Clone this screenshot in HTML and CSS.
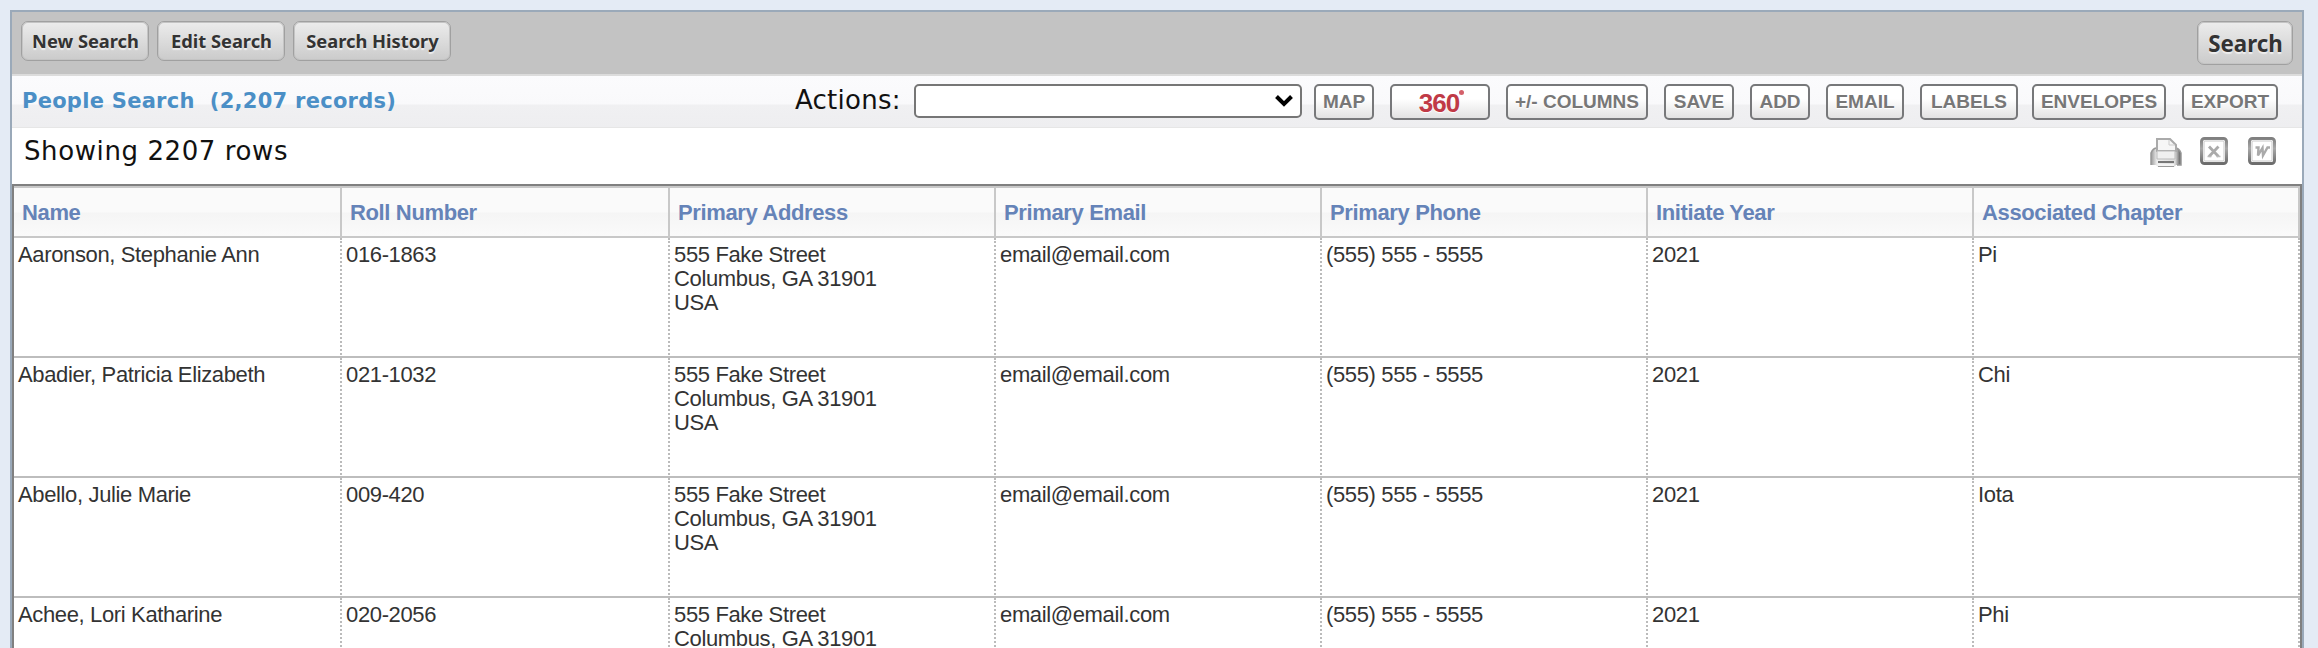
FILE: index.html
```html
<!DOCTYPE html>
<html lang="en">
<head>
  <meta charset="UTF-8">
  <title>People Search</title>
  <link rel="stylesheet" href="styles.css">
</head>
<body>
  <div class="page">
    <div class="toolbar">
      <button class="btn btn-new">New Search</button>
      <button class="btn btn-edit">Edit Search</button>
      <button class="btn btn-history">Search History</button>
      <button class="btn btn-search">Search</button>
    </div>

    <div class="heading">
      <h2>People Search&nbsp; (2,207 records)</h2>
      <label>Actions:</label>
      <div class="select">
        <svg width="20" height="14" viewBox="0 0 20 14"><path d="M2.5 2.5 L10 10 L17.5 2.5" fill="none" stroke="#000" stroke-width="4"/></svg>
      </div>
      <div class="actions">
        <button class="act map">MAP</button>
        <button class="act full"><span class="deg">360<i></i></span></button>
        <button class="act columns">+/- COLUMNS</button>
        <button class="act save">SAVE</button>
        <button class="act add">ADD</button>
        <button class="act email">EMAIL</button>
        <button class="act labels">LABELS</button>
        <button class="act envelopes">ENVELOPES</button>
        <button class="act export">EXPORT</button>
      </div>
    </div>

    <div class="status">
      <span class="count">Showing 2207 rows</span>
      <div class="icons">
        <svg width="32" height="30" viewBox="0 0 32 30">
          <defs>
            <linearGradient id="side" x1="0" y1="0" x2="1" y2="0"><stop offset="0" stop-color="#999"/><stop offset=".2" stop-color="#eee"/><stop offset=".8" stop-color="#ddd"/><stop offset="1" stop-color="#555"/></linearGradient>
            <linearGradient id="frame" x1="0" y1="0" x2="0" y2="1"><stop offset="0" stop-color="#808080"/><stop offset=".4" stop-color="#a8a8a8"/><stop offset="1" stop-color="#6c6c6c"/></linearGradient>
          </defs>
          <path d="M1 16 Q3 11 7 11 H25 Q29 11 31 16 V28 H26 L24 30 H8 L6 28 H1 Z" fill="url(#side)"/>
          <path d="M1 28 V16 Q3 11 7 11 M25 11 Q29 11 31 16 V28 H27" fill="none" stroke="#999" stroke-width="1.5"/>
          <path d="M7 14 V2 H20 L26 8 V14 Z" fill="#f6f6f6" stroke="#aaa" stroke-width="2"/>
          <path d="M19 3 V8 H25" fill="none" stroke="#ccc"/>
          <path d="M7 14 H25 V22 H7 Z" fill="#f0f0f0" stroke="#bbb"/>
          <path d="M8 25 H24" stroke="#777" stroke-width="2"/>
          <path d="M8 28 H24" stroke="#f4f4f4" stroke-width="2"/>
          <path d="M8 29.500 H24" stroke="#999"/>
        </svg>
        <svg width="28" height="28" viewBox="0 0 28 28">
          <rect x="1.500" y="1.500" width="25" height="25" rx="3" fill="#fff" stroke="url(#frame)" stroke-width="3"/>
          <rect x="4" y="4" width="20" height="20" rx="1" fill="#fff" stroke="#c8c8c8"/>
          <path d="M9 9.500 L18.500 19.500 M18.500 9.500 L9 19.500" stroke="#aaa" stroke-width="2.800"/>
          <path d="M7.500 19.500 H11.500 M16.500 19.500 H20.500" stroke="#bbb" stroke-width="1.500"/>
        </svg>
        <svg width="28" height="28" viewBox="0 0 28 28">
          <rect x="1.500" y="1.500" width="25" height="25" rx="3" fill="#fff" stroke="url(#frame)" stroke-width="3"/>
          <rect x="4" y="4" width="20" height="20" rx="1" fill="#fff" stroke="#c8c8c8"/>
          <path d="M7.500 10.500 H10.500 L10 18.500 L14.500 11 L15 18.500 L19.500 10.500 H22" fill="none" stroke="#aaa" stroke-width="2.400"/>
        </svg>
      </div>
    </div>

    <table class="grid">
      <colgroup><col class="wide"><col class="wide"><col><col><col><col><col></colgroup>
      <thead>
        <tr>
          <th>Name</th><th>Roll Number</th><th>Primary Address</th><th>Primary Email</th><th>Primary Phone</th><th>Initiate Year</th><th>Associated Chapter</th>
        </tr>
      </thead>
      <tbody>
        <tr>
          <td>Aaronson, Stephanie Ann</td><td>016-1863</td><td>555 Fake Street<br>Columbus, GA 31901<br>USA</td><td>email@email.com</td><td>(555) 555 - 5555</td><td>2021</td><td>Pi</td>
        </tr>
        <tr>
          <td>Abadier, Patricia Elizabeth</td><td>021-1032</td><td>555 Fake Street<br>Columbus, GA 31901<br>USA</td><td>email@email.com</td><td>(555) 555 - 5555</td><td>2021</td><td>Chi</td>
        </tr>
        <tr>
          <td>Abello, Julie Marie</td><td>009-420</td><td>555 Fake Street<br>Columbus, GA 31901<br>USA</td><td>email@email.com</td><td>(555) 555 - 5555</td><td>2021</td><td>Iota</td>
        </tr>
        <tr>
          <td>Achee, Lori Katharine</td><td>020-2056</td><td>555 Fake Street<br>Columbus, GA 31901</td><td>email@email.com</td><td>(555) 555 - 5555</td><td>2021</td><td>Phi</td>
        </tr>
      </tbody>
    </table>
  </div>
</body>
</html>
```
FILE: styles.css
```css
* { box-sizing: border-box; }
body { margin: 0; padding: 10px 14px 0 10px; background: #e4ebf5; font-family: "DejaVu Sans", Verdana, sans-serif; }
button { margin: 0; padding: 0; white-space: nowrap; }
h2 { margin: 0; }

.page { width: 2294px; height: 638px; border: 2px solid #9aa9b9; border-bottom: 0; background: #fff; overflow: hidden; }

/* top bar */
.toolbar { display: flex; align-items: flex-start; gap: 8px; height: 62px; padding: 9px; background: #c3c3c3; }
.btn { height: 40px; padding: 0 0 2px 1px; border: 1px solid #a0a0a0; border-radius: 7px; background: linear-gradient(#ececec, #cbcbcb); box-shadow: inset 0 0 0 1px #c4c4c4; color: #333; font: bold 18.300px "Noto Sans", "Open Sans", sans-serif; text-shadow: 0 2px 1px #eee; }
.btn-new, .btn-edit { width: 128px; }
.btn-history { width: 158px; }
.btn-search { width: 96px; height: 44px; padding-bottom: 0; margin-left: auto; font-size: 22.300px; }

/* title and actions */
.heading { display: flex; align-items: flex-start; height: 54px; border-top: 2px solid #dcdcdc; border-bottom: 1px solid #e6e6e6; background: linear-gradient(#fbfbfd 0, #f9f9fb 28px, #f0f0f2 29px, #eeeef0 100%); }
.heading h2 { width: 783px; padding: 11px 0 0 10px; color: #4b8fc6; font-size: 21px; line-height: 28px; letter-spacing: .27px; white-space: nowrap; }
.heading label { width: 119px; padding-top: 9px; font-size: 26px; line-height: 30px; letter-spacing: .25px; color: #111; }
.select { display: flex; align-items: center; justify-content: flex-end; width: 388px; height: 34px; margin-top: 8px; padding-right: 6px; border: 2px solid #767676; border-radius: 5px; background: #fff; }
.actions { display: flex; gap: 16px; margin: 8px 0 0 12px; }
.act { height: 36px; padding-bottom: 1px; border: 2px solid #77787a; border-radius: 5px; background: linear-gradient(#fff 40%, #e2e2e2); color: #777; font: bold 19px "Liberation Sans", Arial, sans-serif; text-shadow: 0 1px 1px #fff; }
.map, .add { width: 60px; }
.full { width: 100px; }
.columns { width: 142px; }
.save { width: 70px; }
.email { width: 78px; }
.labels { width: 98px; margin-right: -2px; }
.envelopes { width: 134px; }
.export { width: 96px; }
.deg { display: inline-flex; padding: 3px 0 0 3px; color: #c03a46; font-size: 26px; line-height: 28px; letter-spacing: -1px; }
.deg i { width: 5px; height: 5px; margin-top: 1px; border-radius: 50%; background: #d4606a; }

/* row count */
.status { display: flex; justify-content: space-between; height: 56px; padding: 8px 26px 0 12px; }
.count { font-size: 26px; line-height: 30px; letter-spacing: .6px; color: #111; }
.icons { display: flex; gap: 20px; padding-top: 1px; }
.icons svg:first-child { margin-right: -2px; }

/* results */
.grid { width: 2290px; table-layout: fixed; border-collapse: separate; border-spacing: 0; border: 2px solid #808080; font: 22px "Liberation Sans", Arial, sans-serif; line-height: 24px; letter-spacing: -.36px; color: #333; }
.grid col { width: 326px; }
.grid col.wide { width: 328px; }
.grid th { height: 52px; padding: 1px 8px 0; border: solid #c8c8c8; border-width: 2px 2px 2px 0; background: linear-gradient(#fafafa 0, #fafafa 50%, #f5f5f5 52%, #fafafa); color: #6583b8; text-align: left; white-space: nowrap; }
.grid td { height: 120px; padding: 5px 4px 0; border-right: 2px dotted #bbb; border-bottom: 2px solid #bdbdbd; vertical-align: top; white-space: nowrap; }
```
